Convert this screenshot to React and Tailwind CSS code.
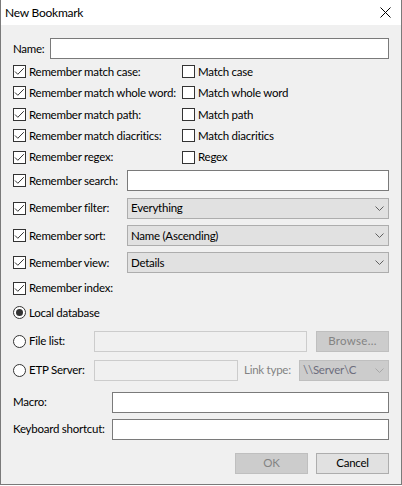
import React from 'react';

const font = "font-['Segoe_UI','Lato',sans-serif]";

const Check = ({ checked }) => (
    <span className="w-[13px] h-[13px] shrink-0 border border-[#333333] bg-white flex items-center justify-center">
        {checked && (
            <svg width="11" height="11" viewBox="0 0 11 11">
                <path d="M1 5.5 L3.8 8.3 L9.8 2.2" fill="none" stroke="#333333" strokeWidth="1" />
            </svg>
        )}
    </span>
);

const Radio = ({ checked }) => (
    <span className="w-[13px] h-[13px] shrink-0 rounded-full border border-[#333333] bg-white flex items-center justify-center">
        {checked && <span className="w-[7px] h-[7px] rounded-full bg-[#333333]" />}
    </span>
);

const Chevron = ({ color = '#606060' }) => (
    <svg width="9" height="5" viewBox="0 0 9 5" className="shrink-0">
        <path d="M0.5 0.5 L4.5 4.5 L8.5 0.5" fill="none" stroke={color} strokeWidth="1" />
    </svg>
);

const CheckRow = ({ label, className = '' }) => (
    <div className={`shrink-0 flex items-center gap-[3px] h-[21.4px] ${className}`}>
        <Check checked />
        <span className="whitespace-nowrap">{label}</span>
    </div>
);

const Select = ({ value }) => (
    <div className="flex-1 min-w-0 h-[21px] bg-[#e1e1e1] border border-[#adadad] flex items-center pl-[3px] pr-[4px]">
        <span className="flex-1 whitespace-nowrap">{value}</span>
        <Chevron />
    </div>
);

const TextBox = ({ className = '' }) => (
    <div className={`h-[21px] min-w-0 bg-white border border-[#7a7a7a] ${className}`} />
);

export default function App() {
    const pairs = [
        ['Remember match case:', 'Match case'],
        ['Remember match whole word:', 'Match whole word'],
        ['Remember match path:', 'Match path'],
        ['Remember match diacritics:', 'Match diacritics'],
        ['Remember regex:', 'Regex'],
    ];

    return (
        <div className={`w-[402px] h-[486px] bg-white text-[11.5px] tracking-[-0.25px] text-black ${font}`}>
            <div className="w-[402px] h-[485px] border-x border-b border-[#7a7a7a] bg-[#f0f0f0] flex flex-col">
                {/* title bar */}
                <div className="h-[25px] shrink-0 bg-white flex items-center pl-[4px] pr-[10px]">
                    <span className="flex-1 text-[12px]">New Bookmark</span>
                    <svg width="11" height="11" viewBox="0 0 11 11">
                        <path d="M0.5 0.5 L10.5 10.5 M10.5 0.5 L0.5 10.5" stroke="#000" strokeWidth="1" />
                    </svg>
                </div>

                <div className="flex flex-col pl-[12px] pr-[12px]">
                    <div className="mt-[13px] flex items-center">
                        <span className="w-[37px] shrink-0">Name:</span>
                        <TextBox className="flex-1" />
                    </div>

                    <div className="mt-[1.8px] flex flex-col">
                        {pairs.map(([left, right]) => (
                            <div key={left} className="flex">
                                <CheckRow label={left} className="w-[169px]" />
                                <div className="flex items-center gap-[3px] h-[21.4px]">
                                    <Check />
                                    <span className="whitespace-nowrap">{right}</span>
                                </div>
                            </div>
                        ))}
                    </div>

                    <div className="mt-[2.2px] flex items-center">
                        <CheckRow label="Remember search:" className="w-[114px]" />
                        <TextBox className="flex-1" />
                    </div>
                    <div className="mt-[6px] flex items-center">
                        <CheckRow label="Remember filter:" className="w-[114px]" />
                        <Select value="Everything" />
                    </div>
                    <div className="mt-[6px] flex items-center">
                        <CheckRow label="Remember sort:" className="w-[114px]" />
                        <Select value="Name (Ascending)" />
                    </div>
                    <div className="mt-[6px] flex items-center">
                        <CheckRow label="Remember view:" className="w-[114px]" />
                        <Select value="Details" />
                    </div>
                    <div className="mt-[4px] flex items-center h-[21px]">
                        <CheckRow label="Remember index:" />
                    </div>

                    <div className="mt-[3.5px] flex items-center gap-[3px] h-[21px]">
                        <Radio checked />
                        <span>Local database</span>
                    </div>
                    <div className="mt-[7.5px] flex items-center h-[21px]">
                        <div className="w-[81px] shrink-0 flex items-center gap-[3px]">
                            <Radio />
                            <span className="whitespace-nowrap">File list:</span>
                        </div>
                        <div className="w-[213px] shrink-0 h-[21px] border border-[#cccccc] bg-[#f0f0f0]" />
                        <div className="ml-auto w-[73px] shrink-0 h-[21px] bg-[#cccccc] border border-[#bfbfbf] flex items-center justify-center text-[#838383] tracking-[0.3px]">
                            Browse...
                        </div>
                    </div>
                    <div className="mt-[8px] flex items-center h-[21px]">
                        <div className="w-[81px] shrink-0 flex items-center gap-[3px]">
                            <Radio />
                            <span className="whitespace-nowrap">ETP Server:</span>
                        </div>
                        <div className="w-[144px] shrink-0 h-[21px] border border-[#cccccc] bg-[#f0f0f0]" />
                        <span className="ml-[6px] whitespace-nowrap text-[#838383]">Link type:</span>
                        <div className="ml-auto w-[90px] shrink-0 h-[21px] bg-[#cccccc] border border-[#bfbfbf] flex items-center pl-[3px] pr-[4px]">
                            <span className="flex-1 whitespace-nowrap text-[#6d6d7d]">\\Server\C</span>
                            <Chevron color="#a8a8a8" />
                        </div>
                    </div>

                    <div className="mt-[11px] flex items-center">
                        <span className="w-[99px] shrink-0">Macro:</span>
                        <TextBox className="flex-1" />
                    </div>
                    <div className="mt-[6px] flex items-center">
                        <span className="w-[99px] shrink-0 whitespace-nowrap">Keyboard shortcut:</span>
                        <TextBox className="flex-1" />
                    </div>

                    <div className="mt-[13px] flex justify-end gap-[8px]">
                        <div className="w-[73px] h-[21px] bg-[#cccccc] border border-[#bfbfbf] flex items-center justify-center text-[#838383]">
                            OK
                        </div>
                        <div className="w-[73px] h-[21px] bg-[#e1e1e1] border border-[#adadad] flex items-center justify-center">
                            Cancel
                        </div>
                    </div>
                </div>
            </div>
        </div>
    );
}
